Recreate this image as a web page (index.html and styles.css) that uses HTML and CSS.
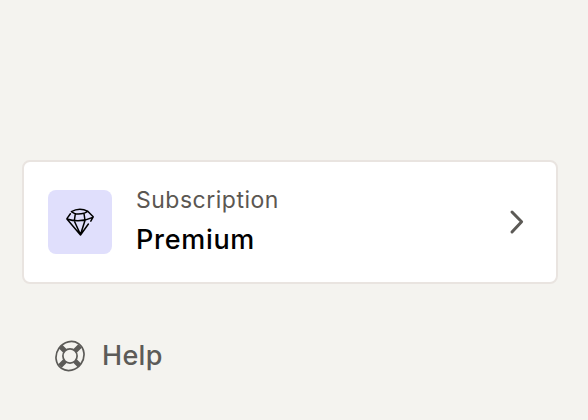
FILE: index.html
```
<!DOCTYPE html>
<html lang="en">

<head>
  <meta charset="UTF-8">
  <meta name="viewport" content="width=device-width, initial-scale=1.0">
  <title>Subscription</title>
  <link rel="stylesheet" href="styles.css">
</head>

<body>
  <a class="card">
    <div class="card-icon">
      <svg width="32" height="32" viewBox="0 0 32 32">
        <path d="M6.4 7.8L2.9 12.6M7.4 5.7Q15.5 1 24 5.4L29.2 10.8L26.8 15.2M2.9 13Q16 17.4 28.8 11.4M2.9 13L16.5 29L24.4 18M7.6 5.8L11.3 7.8Q15.8 8.3 20 7.3L23.8 5.4M11.3 7.8L10.3 15L16.5 28.6L21 14.4L20 7.5"/>
      </svg>
    </div>
    <div class="card-text">
      <span class="label">Subscription</span>
      <span class="plan">Premium</span>
    </div>
    <svg class="arrow" width="18" height="26" viewBox="0 0 18 26">
      <path d="M4 3L13.6 12.8L4 23"/>
    </svg>
  </a>

  <a class="help">
    <svg class="help-icon" width="32" height="32" viewBox="0 0 32 32">
      <ellipse cx="16" cy="16" rx="13.5" ry="15" transform="rotate(35 16 16)"/>
      <circle cx="16" cy="16" r="7.1"/>
      <path class="strap" d="M6.5 6.5L11 11M26 6L21 11M25.5 25.5L21 21M6 26L11 21"/>
    </svg>
    <span class="help-text">Help</span>
  </a>
</body>

</html>
```
FILE: styles.css
```
body {
  margin: 0;
  padding: 160px 30px 0 22px;
  background-color: #f4f3ef;
  font-family: Inter, sans-serif;
}

.card {
  display: flex;
  align-items: center;
  box-sizing: border-box;
  height: 124px;
  padding: 0 30px 0 24px;
  background-color: #fff;
  border: 2px solid #e9e4e0;
  border-radius: 8px;
}

.card-icon {
  display: flex;
  align-items: center;
  justify-content: center;
  width: 64px;
  height: 64px;
  border-radius: 8px;
  background-color: #e0dffc;
}

svg {
  fill: none;
  stroke-linecap: round;
  stroke-linejoin: round;
}

.card-icon svg {
  stroke: #000;
  stroke-width: 1.5;
}

.card-text {
  display: flex;
  flex-direction: column;
  flex: 1;
  margin-left: 24px;
  padding-bottom: 4px;
}

.label {
  color: #5b5752;
  font-size: 23px;
  line-height: 40px;
  letter-spacing: 0.5px;
}

.plan {
  color: #000;
  font-size: 27px;
  font-weight: 500;
  line-height: 40px;
  letter-spacing: 0.7px;
}

.arrow {
  stroke: #5c5a56;
  stroke-width: 3;
}

.help {
  display: flex;
  align-items: center;
  height: 48px;
  margin: 48px 0 0 32px;
}

.help-icon {
  stroke: #5c5b58;
  stroke-width: 1.7;
}

.strap {
  stroke-width: 5;
  stroke-linecap: butt;
}

.help-text {
  margin-left: 16px;
  padding-bottom: 2px;
  color: #5c5b58;
  font-size: 27px;
  font-weight: 500;
  letter-spacing: 0.3px;
}
```
